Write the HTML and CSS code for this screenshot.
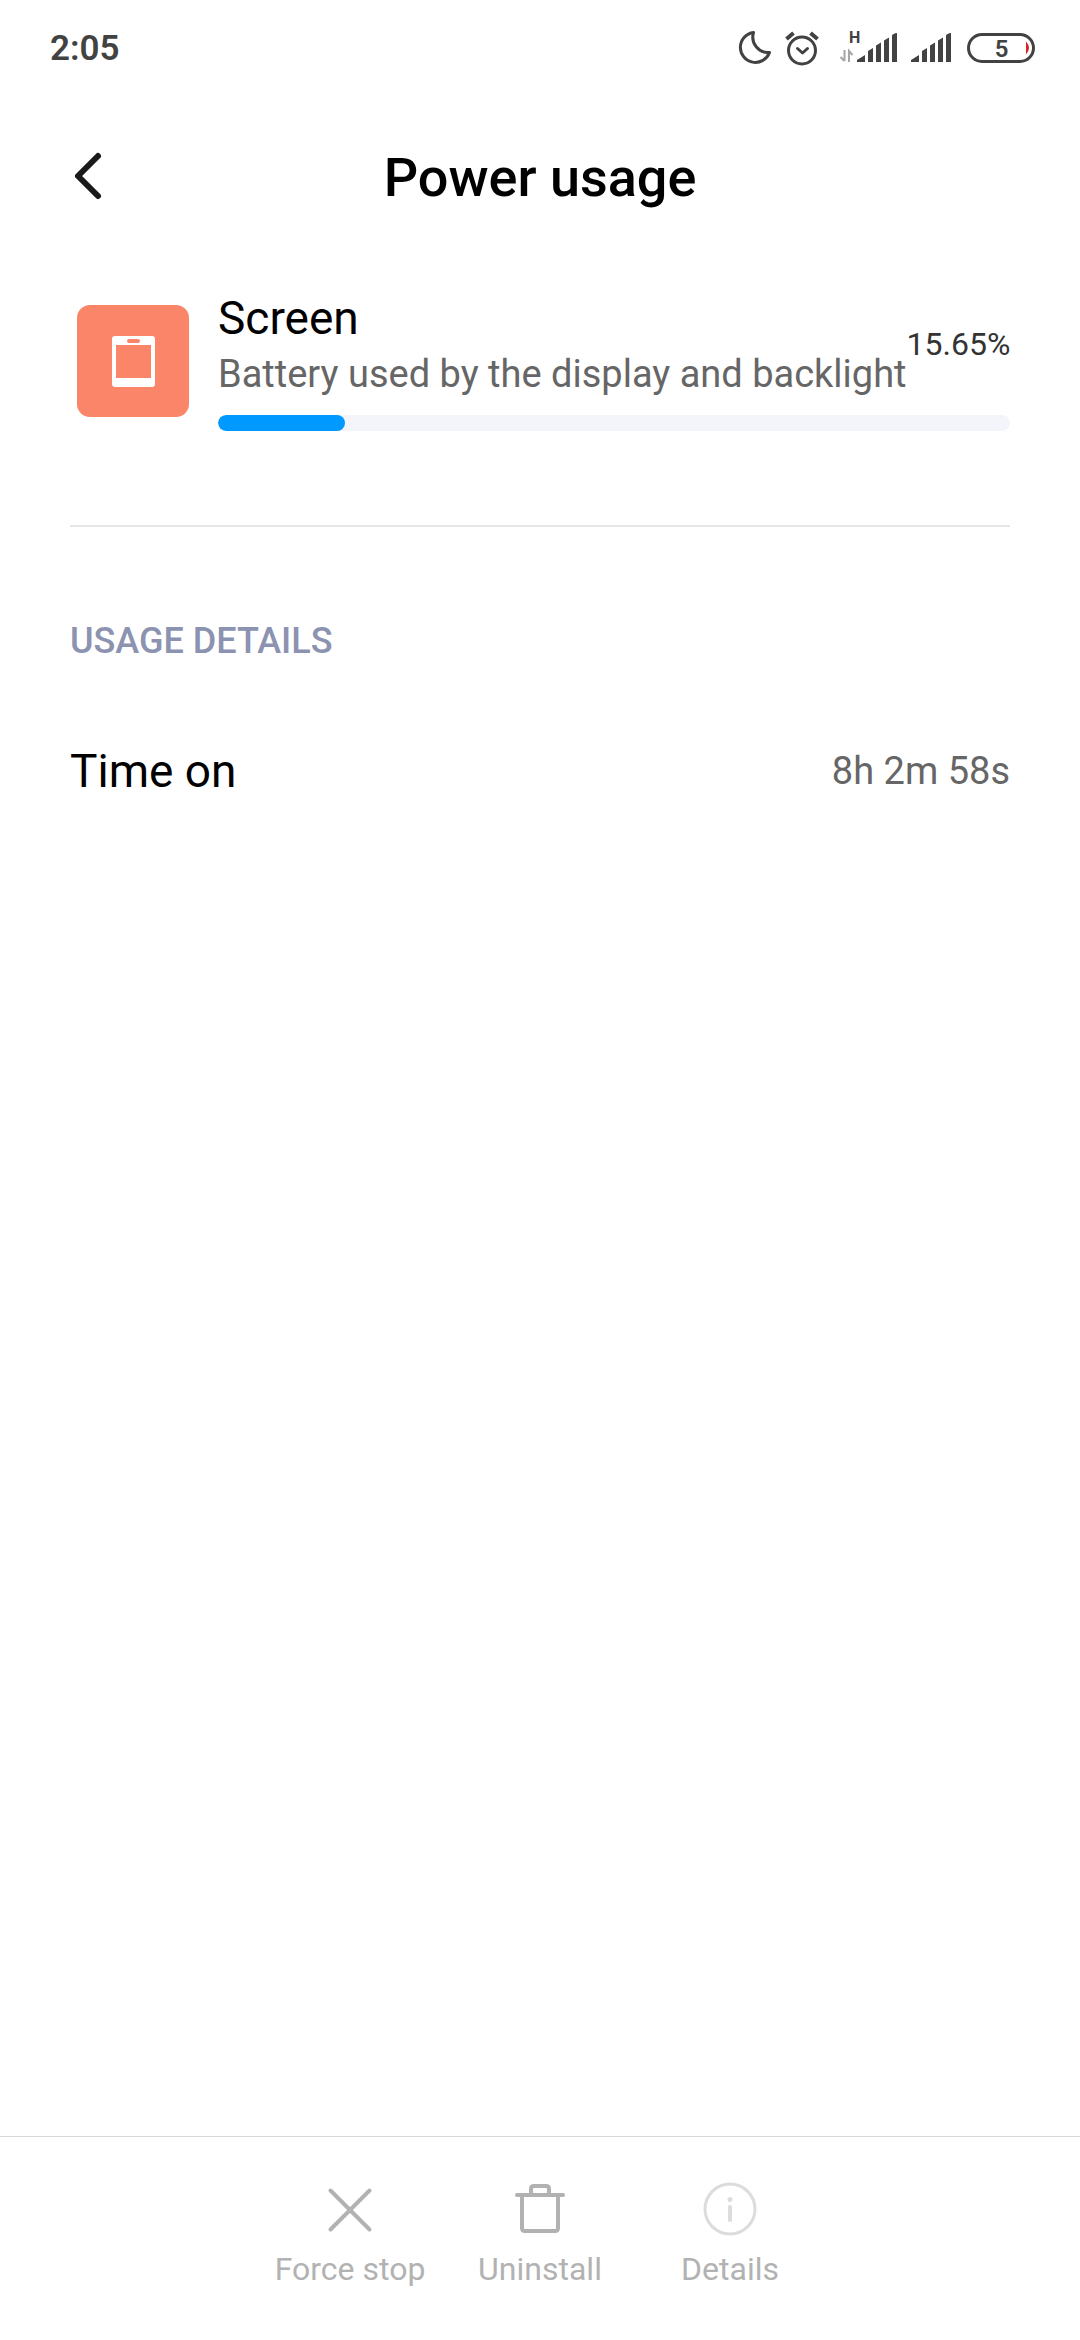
FILE: index.html
```html
<!DOCTYPE html>
<html lang="en">
<head>
<meta charset="utf-8">
<meta name="viewport" content="width=device-width, initial-scale=1">
<title>Power usage</title>
<link rel="stylesheet" href="styles.css">
</head>
<body>
<div class="status-bar">
  <time class="clock">2:05</time>
  <div class="status-icons">
    <svg class="moon" width="36" height="40" viewBox="0 1 36 40" fill="none" stroke="#424242" stroke-width="3" stroke-linejoin="round" aria-hidden="true"><path d="M17.500 4.500A15 15 0 1 0 33.500 24.500A15.500 15.500 0 0 1 17.500 4.500Z"/></svg>
    <svg class="alarm" width="36" height="40" viewBox="0 0 36 40" fill="none" stroke="#424242" stroke-width="3" stroke-linecap="round" stroke-linejoin="round" aria-hidden="true"><circle cx="18" cy="21.500" r="13.500"/><path d="M13.500 19.500l5 4.500 5-4.500"/><path d="M2.500 10l7-6M33.500 10l-7-6" stroke-width="4" stroke-linecap="butt"/></svg>
    <svg class="signal-data" width="58" height="40" viewBox="0 -1 58 40" aria-hidden="true">
      <text class="network" x="9" y="13">H</text>
      <path d="M4.500 20v11M4.500 31l-4-4M9 32V21l3.500 4" fill="none" stroke="#a6a6a6" stroke-width="2"/>
      <path d="M17 32v-2l8-5v7zM28 32V21l5-3v14zM36 32V15.500l5-3V32zM44 32V10.500l5-3V32zM52 32V5.500q1-2 5-2.500V32z" fill="#424242"/>
    </svg>
    <svg class="signal" width="42" height="40" viewBox="0 -1 42 40" aria-hidden="true"><path d="M1 32v-2l8-5v7zM12 32V21l5-3v14zM20 32V15.500l5-3V32zM28 32V10.500l5-3V32zM36 32V5.500q1-2 5-2.500V32z" fill="#424242"/></svg>
    <svg class="battery" width="70" height="40" viewBox="0 -1 70 40" aria-hidden="true"><rect x="2.500" y="4.500" width="65" height="27" rx="13.500" fill="none" stroke="#424242" stroke-width="3"/><path d="M60 11.500q6 6.500 0 13z" fill="#d8232a"/><text class="charge" x="35.500" y="26.500" text-anchor="middle">5</text></svg>
  </div>
</div>

<header class="app-bar">
  <button class="back" type="button" aria-label="Back"><svg width="36" height="54" viewBox="0 2 36 54" fill="none" stroke="#1a1a1a" stroke-width="6" stroke-linecap="round" stroke-linejoin="round" aria-hidden="true"><path d="M28 7L8 27L28 47"/></svg></button>
  <h1 class="title">Power usage</h1>
</header>

<main class="content">
  <section class="usage">
    <svg class="app-icon" width="126" height="126" viewBox="0 0 126 126" aria-hidden="true"><rect x="7" y="8" width="112" height="112" rx="13" fill="#fa8568"/><rect x="42" y="39" width="43" height="51" rx="3" fill="#fff"/><rect x="46" y="48" width="35" height="33" fill="#fa8568"/><rect x="57" y="42" width="13" height="4" rx="2" fill="#fa8568"/></svg>
    <div class="usage-body">
      <div class="usage-top">
        <div class="usage-text">
          <h2 class="usage-name" id="usage-name">Screen</h2>
          <p class="usage-note">Battery used by the display and backlight</p>
        </div>
        <span class="percent">15.65%</span>
      </div>
      <progress class="meter" value="16" max="100" aria-labelledby="usage-name"></progress>
    </div>
  </section>
  <section class="details">
    <h2 class="section-title">USAGE DETAILS</h2>
    <dl class="detail-row">
      <dt class="detail-label">Time on</dt>
      <dd class="detail-value">8h 2m 58s</dd>
    </dl>
  </section>
</main>

<footer class="actions">
  <button class="action" type="button" disabled><svg width="54" height="54" viewBox="0 0 54 54" fill="none" stroke="#b2b2b2" stroke-width="4" stroke-linecap="round" aria-hidden="true"><path d="M7.500 7.500l39 39M46.500 7.500l-39 39"/></svg>Force stop</button>
  <button class="action" type="button" disabled><svg width="54" height="54" viewBox="0 0 54 54" fill="none" stroke="#b2b2b2" stroke-width="4" stroke-linecap="round" stroke-linejoin="round" aria-hidden="true"><path d="M4 12h46M9 12v33q0 3 3 3h30q3 0 3-3V12M18 12V6q0-3 3-3h12q3 0 3 3v6"/></svg>Uninstall</button>
  <button class="action" type="button" disabled><svg width="54" height="54" viewBox="0 0 54 54" fill="none" stroke="#dcdcdc" aria-hidden="true"><circle cx="27" cy="26" r="25" stroke-width="3"/><path d="M27 24v13" stroke-width="4" stroke-linecap="round"/><circle cx="27" cy="16.500" r="2.500" fill="#dcdcdc" stroke="none"/></svg>Details</button>
</footer>
</body>
</html>
```
FILE: styles.css
```css
* {
  box-sizing: border-box;
}

body {
  display: flex;
  flex-direction: column;
  min-height: 100vh;
  margin: 0;
  background: #fff;
  color: #000;
  font-family: Roboto, sans-serif;
}

h1, h2, p, dl, dd {
  margin: 0;
  font-weight: 400;
}

svg {
  display: block;
  flex: none;
  overflow: visible;
}

button {
  padding: 0;
  border: 0;
  background: none;
  font: inherit;
}

.status-bar {
  display: flex;
  align-items: center;
  justify-content: space-between;
  height: 98px;
  padding: 0 44px 0 50px;
  color: #424242;
}

.clock {
  font-size: 35px;
  line-height: 40px;
  font-weight: 600;
}

.status-icons {
  display: flex;
  gap: 12px;
}

.signal-data {
  margin-left: 8px;
}

.battery {
  margin-left: 2px;
}

.network {
  font-size: 16px;
  font-weight: 700;
  fill: #424242;
}

.charge {
  font-size: 24px;
  font-weight: 600;
  fill: #424242;
}

.app-bar {
  display: grid;
  grid-template-columns: 36px 1fr 36px;
  align-items: center;
  height: 160px;
  padding: 0 70px;
}

.title {
  font-size: 54px;
  line-height: 64px;
  font-weight: 500;
  text-align: center;
}

.content {
  flex: 1;
  padding: 30px 70px;
}

.usage {
  display: flex;
  align-items: center;
  gap: 22px;
  padding-bottom: 94px;
  border-bottom: 2px solid #e6e6e6;
}

.usage-body {
  flex: 1;
}

.usage-top {
  display: flex;
  align-items: center;
  justify-content: space-between;
  margin-bottom: 15px;
  white-space: nowrap;
}

.usage-name {
  font-size: 46px;
  line-height: 60px;
}

.usage-note {
  color: #666;
  font-size: 38px;
  line-height: 52px;
}

.percent {
  color: #333;
  font-size: 32px;
  line-height: 40px;
}

.meter {
  display: block;
  width: 100%;
  height: 16px;
  border: 0;
  border-radius: 8px;
  background: #f3f5fa;
  appearance: none;
  overflow: hidden;
}

.meter::-webkit-progress-bar {
  background: #f3f5fa;
}

.meter::-webkit-progress-value {
  border-radius: 8px;
  background: #0099ff;
}

.meter::-moz-progress-bar {
  border-radius: 8px;
  background: #0099ff;
}

.section-title {
  margin-top: 90px;
  color: #8c93b0;
  font-size: 36px;
  line-height: 48px;
  font-weight: 500;
}

.detail-row {
  display: flex;
  align-items: center;
  justify-content: space-between;
  margin-top: 76px;
}

.detail-label {
  font-size: 46px;
  line-height: 60px;
}

.detail-value {
  color: #666;
  font-size: 38px;
  line-height: 52px;
}

.actions {
  display: flex;
  justify-content: center;
  height: 204px;
  padding-top: 46px;
  border-top: 1px solid #d8d8d8;
}

.action {
  display: flex;
  flex-direction: column;
  align-items: center;
  gap: 12px;
  width: 190px;
  color: #b2b2b2;
  font-size: 32px;
  line-height: 40px;
  white-space: nowrap;
}
```
